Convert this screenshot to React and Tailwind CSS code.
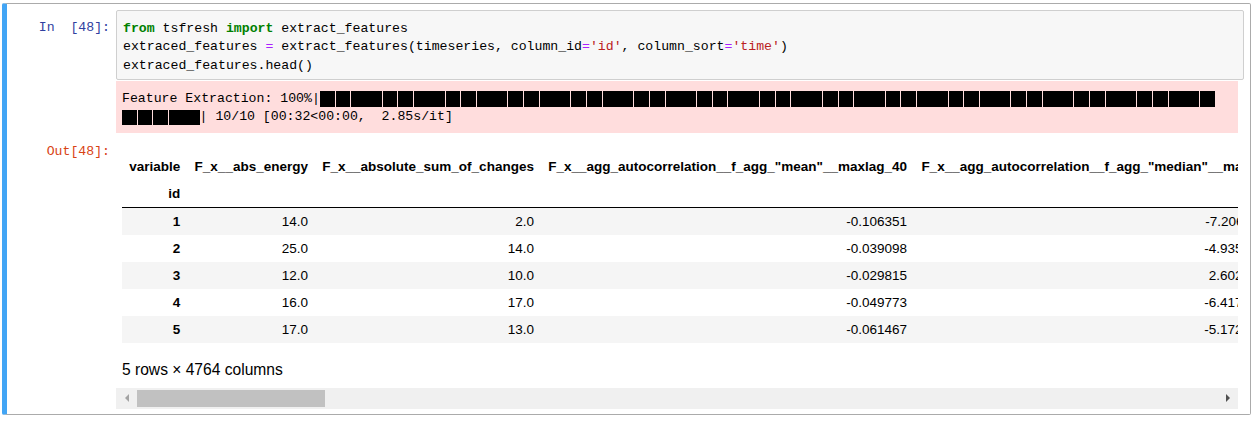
import React from "react";

const rows = [
  ["1", "14.0", "2.0", "-0.106351", "-7.206112e-18"],
  ["2", "25.0", "14.0", "-0.039098", "-4.935437e-18"],
  ["3", "12.0", "10.0", "-0.029815", "2.602085e-18"],
  ["4", "16.0", "17.0", "-0.049773", "-6.417290e-18"],
  ["5", "17.0", "13.0", "-0.061467", "-5.172193e-18"],
];

const headers = [
  "F_x__abs_energy",
  "F_x__absolute_sum_of_changes",
  'F_x__agg_autocorrelation__f_agg_"mean"__maxlag_40',
  'F_x__agg_autocorrelation__f_agg_"median"__maxlag_40',
];

function BlockGroup() {
  return (
    <>
      <span className="inline-block w-[14.7px] h-[16px] bg-black mr-px shrink-0" />
      <span className="inline-block w-[14.7px] h-[16px] bg-black mr-px shrink-0" />
      <span className="inline-block w-[30.5px] h-[16px] bg-black mr-px shrink-0" />
    </>
  );
}

export default function App() {
  const groups = Array.from({ length: 14 });
  return (
    <div className="w-[1255px] h-[428px] bg-white overflow-hidden pt-[3px] pl-[2px]">
      <div className="w-[1249px] h-[412px] border border-[#ababab] border-l-[5px] border-l-[#42A5F5] rounded-[2px] pt-[6px] pl-[5.5px] pr-[6px] flex flex-col">
        {/* Input row */}
        <div className="flex">
          <div className="w-[103.5px] shrink-0 pr-[6px] pt-[9px] text-right font-['Liberation_Mono',monospace] text-[13.2px] leading-[18.7px] text-[#303F9F] whitespace-pre">
            {"In  [48]:"}
          </div>
          <div className="flex-1 h-[70px] border border-[#cfcfcf] bg-[#f7f7f7] rounded-[2px] pt-[8.5px] pl-[6px] font-['Liberation_Mono',monospace] text-[13.2px] leading-[18.7px] text-black whitespace-pre">
            <div>
              <span className="font-bold text-[#008000]">from</span> tsfresh{" "}
              <span className="font-bold text-[#008000]">import</span> extract_features
            </div>
            <div>
              extraced_features <span className="text-[#AA22FF]">=</span> extract_features(timeseries, column_id
              <span className="text-[#AA22FF]">=</span>
              <span className="text-[#BA2121]">'id'</span>, column_sort
              <span className="text-[#AA22FF]">=</span>
              <span className="text-[#BA2121]">'time'</span>)
            </div>
            <div>extraced_features.head()</div>
          </div>
        </div>

        {/* stderr row */}
        <div className="flex mt-px">
          <div className="w-[103.5px] shrink-0" />
          <div className="flex-1 mr-[6px] h-[52px] bg-[#ffdddd] pt-[9px] pl-[6px] font-['Liberation_Mono',monospace] text-[13.2px] leading-[18px] text-black whitespace-pre">
            <div className="flex items-center h-[18px]">
              <span>Feature Extraction: 100%|</span>
              <span className="flex items-center">
                {groups.map((_, i) => (
                  <BlockGroup key={i} />
                ))}
                <span className="inline-block w-[14.7px] h-[16px] bg-black shrink-0" />
              </span>
            </div>
            <div className="flex items-center h-[18px]">
              <span className="flex items-center">
                <span className="inline-block w-[14.7px] h-[15px] bg-black mr-px shrink-0" />
                <span className="inline-block w-[14.7px] h-[15px] bg-black mr-px shrink-0" />
                <span className="inline-block w-[14.7px] h-[15px] bg-black mr-px shrink-0" />
                <span className="inline-block w-[30.5px] h-[15px] bg-black shrink-0" />
              </span>
              <span>{"| 10/10 [00:32<00:00,  2.85s/it]"}</span>
            </div>
          </div>
        </div>

        {/* Out row */}
        <div className="flex">
          <div className="w-[103.5px] shrink-0 pr-[6px] pt-[9.6px] text-right font-['Liberation_Mono',monospace] text-[13.2px] leading-[18.7px] text-[#D84315] whitespace-pre">
            {"Out[48]:"}
          </div>
          <div className="flex-1 min-w-0 mr-[6px] pt-[20.3px] font-['Liberation_Sans',Arial,sans-serif] text-black">
            <div className="overflow-hidden pl-[6px]">
              <table className="border-collapse whitespace-nowrap text-[13.5px]">
                <thead className="border-b border-black">
                  <tr>
                    <th className="px-[7.2px] py-[6.5px] leading-[14px] text-right font-bold">variable</th>
                    {headers.map((h) => (
                      <th key={h} className="px-[7.2px] py-[6.5px] leading-[14px] text-right font-bold">
                        {h}
                      </th>
                    ))}
                  </tr>
                  <tr>
                    <th className="px-[7.2px] py-[6.5px] leading-[14px] text-right font-bold">id</th>
                    {headers.map((h) => (
                      <th key={h} className="px-[7.2px] py-[6.5px] leading-[14px]" />
                    ))}
                  </tr>
                </thead>
                <tbody>
                  {rows.map((r, i) => (
                    <tr key={r[0]} className={i % 2 === 0 ? "bg-[#f5f5f5]" : "bg-white"}>
                      <th className="px-[7.2px] py-[6.5px] leading-[14px] text-right font-bold">{r[0]}</th>
                      {r.slice(1).map((v, j) => (
                        <td key={j} className="px-[7.2px] py-[6.5px] leading-[14px] text-right">
                          {v}
                        </td>
                      ))}
                    </tr>
                  ))}
                </tbody>
              </table>
              <p className="mt-[18px] text-[15.6px] leading-[17.4px]">5 rows × 4764 columns</p>
            </div>
            {/* scrollbar */}
            <div className="mt-[9px] h-[21px] bg-[#f0f0f0] flex items-center">
              <div className="w-[21px] h-full flex items-center justify-center shrink-0">
                <svg width="4" height="8" viewBox="0 0 4 8">
                  <path d="M4 0 L0 4 L4 8 Z" fill="#a3a3a3" />
                </svg>
              </div>
              <div className="flex-1 h-full flex items-center">
                <div className="w-[188px] h-[17px] bg-[#c1c1c1]" />
              </div>
              <div className="w-[21px] h-full flex items-center justify-center shrink-0">
                <svg width="4" height="8" viewBox="0 0 4 8">
                  <path d="M0 0 L4 4 L0 8 Z" fill="#505050" />
                </svg>
              </div>
            </div>
          </div>
        </div>
      </div>
    </div>
  );
}
